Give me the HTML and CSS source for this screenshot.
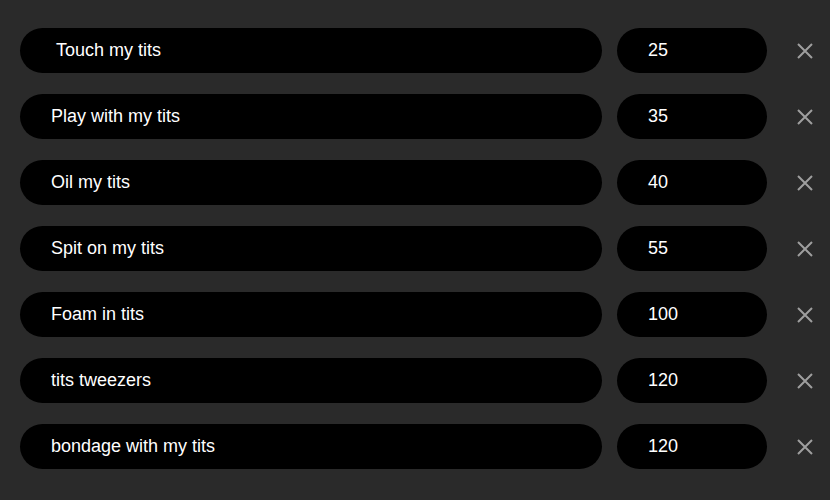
FILE: index.html
```html
<!DOCTYPE html>
<html>
<head>
<meta charset="utf-8">
<link rel="stylesheet" href="styles.css">
</head>
<body>
<div class="list">
  <div class="row"><div class="pill name">&nbsp;Touch my tits</div><div class="pill amount">25</div><span class="remove"><svg viewBox="0 0 16 16" width="16" height="16"><path d="M1 1L15 15M15 1L1 15"/></svg></span></div>
  <div class="row"><div class="pill name">Play with my tits</div><div class="pill amount">35</div><span class="remove"><svg viewBox="0 0 16 16" width="16" height="16"><path d="M1 1L15 15M15 1L1 15"/></svg></span></div>
  <div class="row"><div class="pill name">Oil my tits</div><div class="pill amount">40</div><span class="remove"><svg viewBox="0 0 16 16" width="16" height="16"><path d="M1 1L15 15M15 1L1 15"/></svg></span></div>
  <div class="row"><div class="pill name">Spit on my tits</div><div class="pill amount">55</div><span class="remove"><svg viewBox="0 0 16 16" width="16" height="16"><path d="M1 1L15 15M15 1L1 15"/></svg></span></div>
  <div class="row"><div class="pill name">Foam in tits</div><div class="pill amount">100</div><span class="remove"><svg viewBox="0 0 16 16" width="16" height="16"><path d="M1 1L15 15M15 1L1 15"/></svg></span></div>
  <div class="row"><div class="pill name">tits tweezers</div><div class="pill amount">120</div><span class="remove"><svg viewBox="0 0 16 16" width="16" height="16"><path d="M1 1L15 15M15 1L1 15"/></svg></span></div>
  <div class="row"><div class="pill name">bondage with my tits</div><div class="pill amount">120</div><span class="remove"><svg viewBox="0 0 16 16" width="16" height="16"><path d="M1 1L15 15M15 1L1 15"/></svg></span></div>
</div>
</body>
</html>
```
FILE: styles.css
```css
html, body {
  margin: 0;
  padding: 0;
  background: #2a2a2a;
  height: 100%;
}
body {
  font-family: "Liberation Sans", Arial, sans-serif;
}
.list {
  display: flex;
  flex-direction: column;
  gap: 21px;
  padding: 28px 0 0 20px;
}
.row {
  display: flex;
  align-items: center;
}
.pill {
  box-sizing: border-box;
  height: 45px;
  border-radius: 23px;
  background: #000;
  color: #fff;
  font-size: 18px;
  line-height: 45px;
  padding-left: 31px;
  white-space: pre;
}
.name {
  width: 582px;
}
.amount {
  width: 150px;
  margin-left: 15px;
}
.remove {
  display: flex;
  margin-left: 30px;
  width: 16px;
  height: 16px;
}
.remove svg {
  stroke: #9e9e9e;
  stroke-width: 2;
  fill: none;
}
```
